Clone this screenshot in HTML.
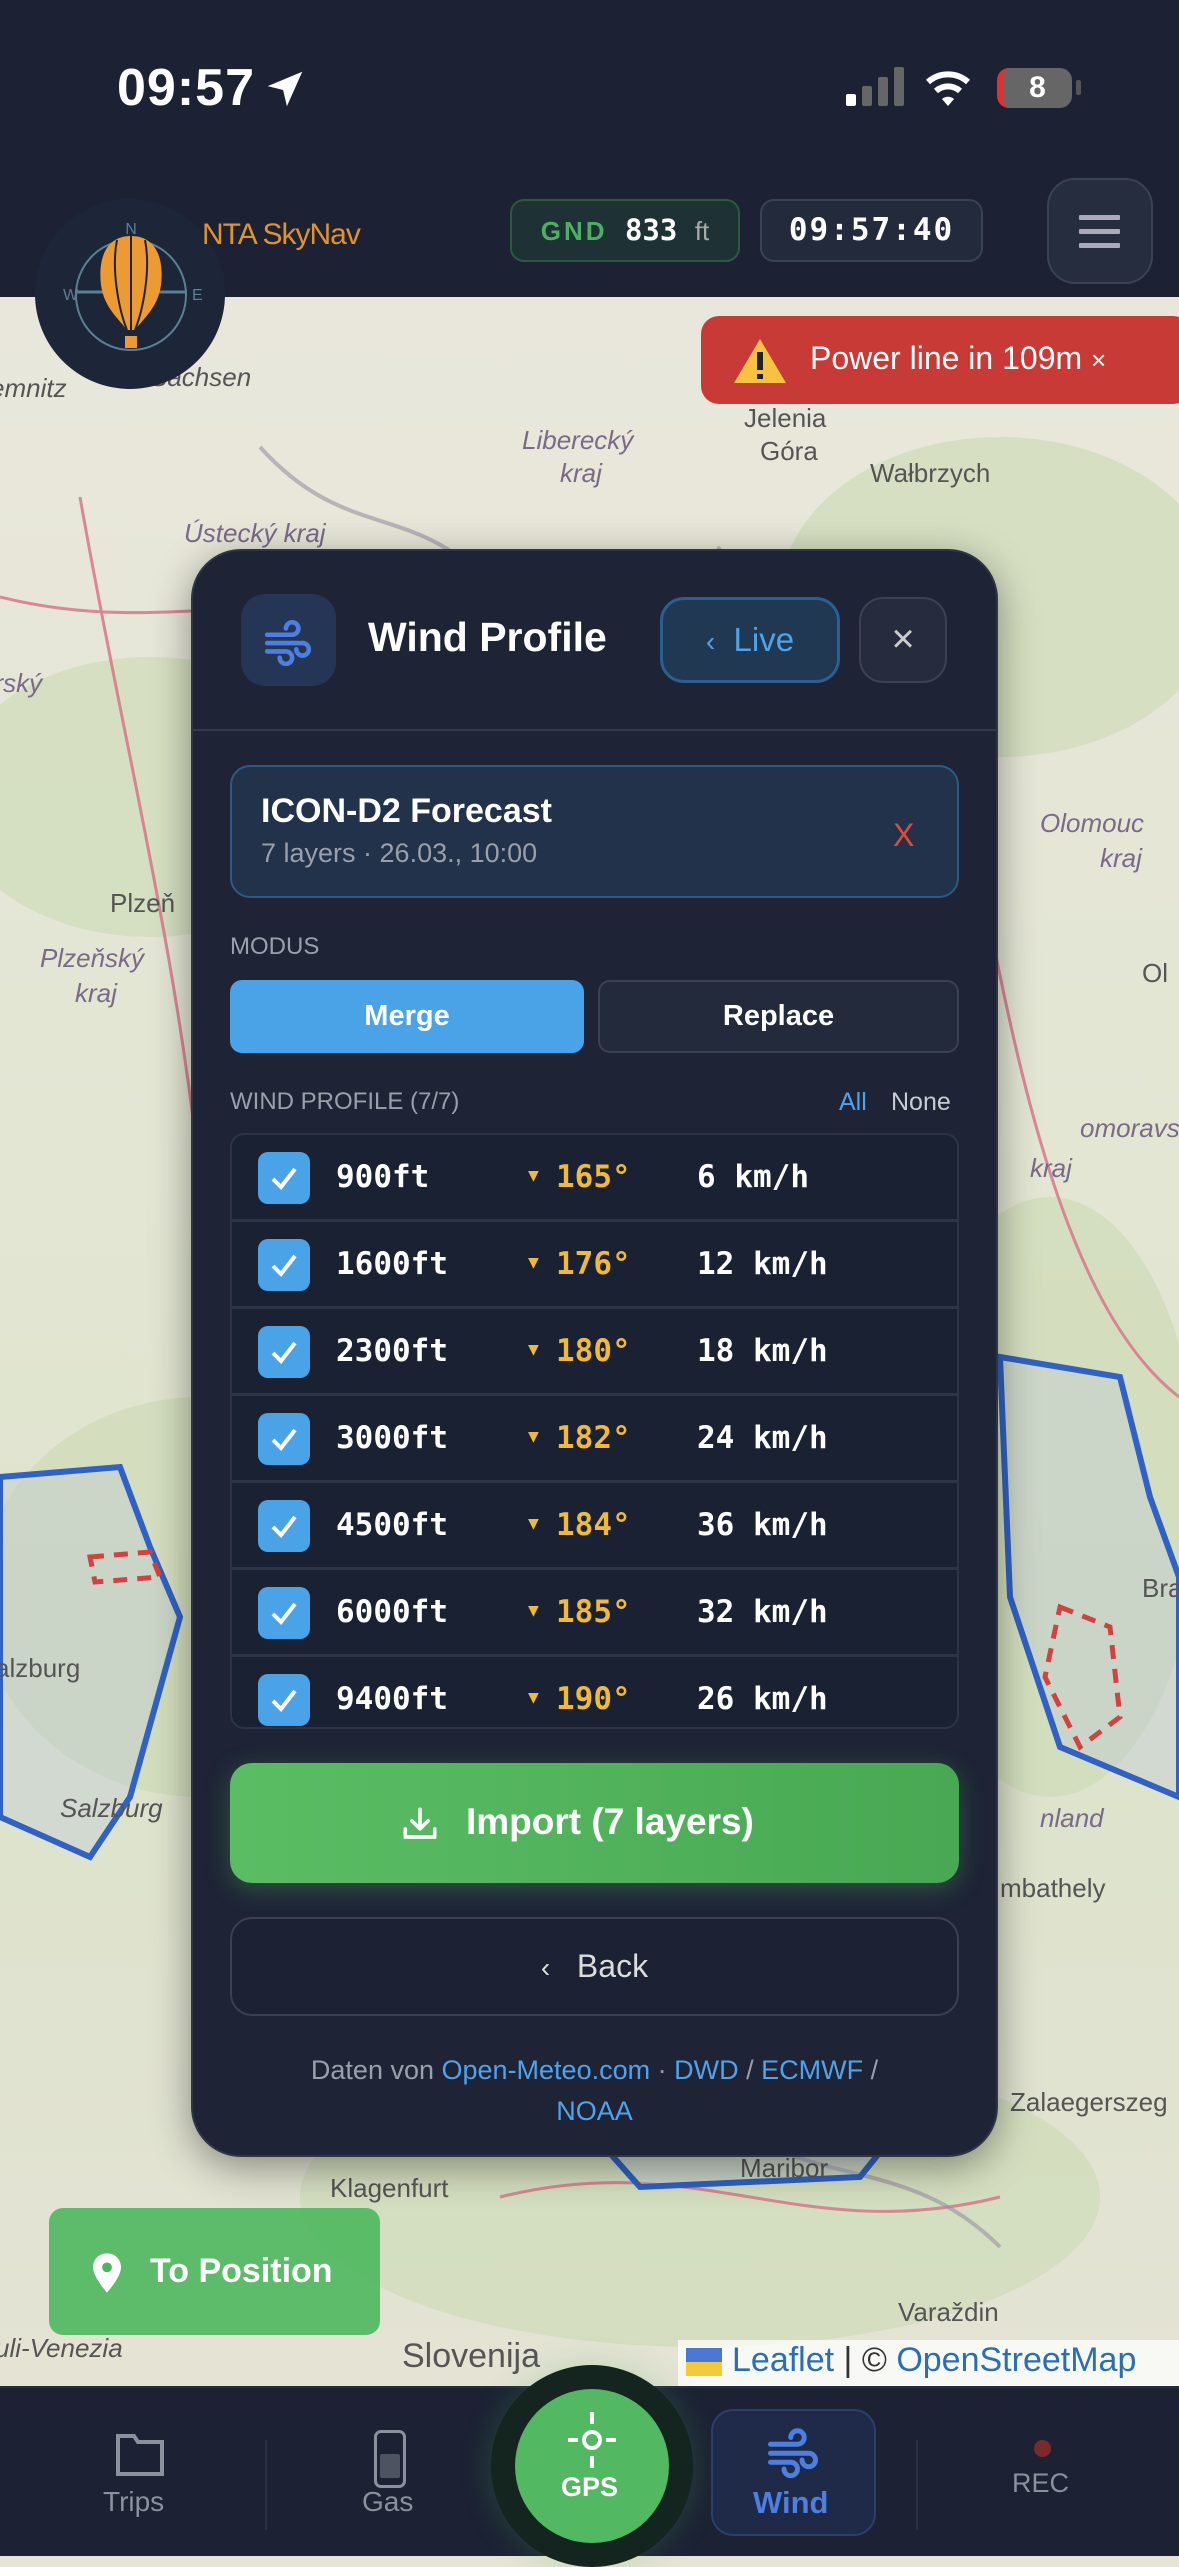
<!DOCTYPE html>
<html><head><meta charset="utf-8"><style>
*{box-sizing:border-box;margin:0;padding:0}
body{width:1179px;height:2556px;overflow:hidden;position:relative;font-family:"Liberation Sans","DejaVu Sans",sans-serif;background:#e6e4d6}
.abs{position:absolute}
.mono{font-family:"DejaVu Sans Mono","Liberation Mono",monospace;font-weight:bold}
.map{left:0;top:297px;width:1179px;height:2090px;background:linear-gradient(180deg,#e9e7dc 0%,#e3e6d3 40%,#dde3cc 70%,#e4e3d4 100%)}
.row{position:absolute;left:0;width:100%;height:87px;border-bottom:3px solid #2c3446;color:#fff;font-size:31px}
.cb{position:absolute;left:26px;top:17px;width:52px;height:52px;background:#4aa3e6;border-radius:10px}
.cb svg{position:absolute;left:12px;top:13px}
</style></head><body>
<div class="abs map">
<svg width="1179" height="2090" style="position:absolute;left:0;top:0">
<g fill="#cfdcb8" opacity=".7"><ellipse cx="150" cy="500" rx="200" ry="140"/><ellipse cx="1000" cy="300" rx="220" ry="160"/><ellipse cx="200" cy="1300" rx="220" ry="200"/><ellipse cx="700" cy="1900" rx="400" ry="150"/><ellipse cx="1050" cy="1200" rx="150" ry="300"/></g>
<g fill="none" stroke="#d96f86" stroke-width="3" opacity=".8"><path d="M0 300 C200 350 300 250 450 400 S700 500 900 450"/><path d="M80 200 C150 600 250 900 200 1400"/><path d="M950 400 C1000 700 1050 1000 1179 1100"/><path d="M500 1900 C700 1850 800 1950 1000 1900"/></g>
<g fill="none" stroke="#9a8fa6" stroke-width="4" opacity=".6"><path d="M260 150 C350 250 420 200 500 300 S650 350 720 250"/><path d="M700 1800 C800 1900 900 1850 1000 1950"/></g>
<g fill="#b9c6da" fill-opacity=".35" stroke="#2f62c4" stroke-width="6"><path d="M0 1180 L120 1170 L150 1250 L180 1320 L130 1500 L90 1560 L0 1520 Z"/><path d="M1000 1060 L1120 1080 L1150 1200 L1179 1280 L1179 1500 L1060 1450 L1010 1300 Z"/><path d="M560 1800 L800 1790 L900 1830 L860 1880 L640 1890 Z"/></g>
<g fill="none" stroke="#d1433f" stroke-width="5" stroke-dasharray="14 10"><path d="M1060 1310 L1110 1330 L1120 1420 L1080 1450 L1045 1380 Z"/><path d="M90 1260 L150 1255 L160 1280 L95 1285 Z"/></g>
<g font-family="Liberation Sans,sans-serif" font-size="26" fill="#555" font-style="italic"><text x="-10" y="100">emnitz</text><text x="150" y="89">Sachsen</text><text x="522" y="152" fill="#7a6a88">Liberecký</text><text x="560" y="185" fill="#7a6a88">kraj</text><text x="744" y="130" font-style="normal">Jelenia</text><text x="760" y="163" font-style="normal">Góra</text><text x="870" y="185" font-style="normal">Wałbrzych</text><text x="184" y="245" fill="#7a6a88">Ústecký kraj</text><text x="-20" y="395" fill="#7a6a88">arský</text><text x="1040" y="535" fill="#7a6a88">Olomouc</text><text x="1100" y="570" fill="#7a6a88">kraj</text><text x="110" y="615" font-style="normal">Plzeň</text><text x="40" y="670" fill="#7a6a88">Plzeňský</text><text x="75" y="705" fill="#7a6a88">kraj</text><text x="1142" y="685" font-style="normal">Ol</text><text x="1080" y="840" fill="#7a6a88">omoravský</text><text x="1030" y="880" fill="#7a6a88">kraj</text><text x="-5" y="1380" font-style="normal">alzburg</text><text x="60" y="1520">Salzburg</text><text x="1040" y="1530" fill="#7a6a88">nland</text><text x="1000" y="1600" font-style="normal">mbathely</text><text x="1010" y="1814" font-style="normal">Zalaegerszeg</text><text x="330" y="1900" font-style="normal">Klagenfurt</text><text x="740" y="1880" font-style="normal">Maribor</text><text x="898" y="2024" font-style="normal">Varaždin</text><text x="-5" y="2060">uli-Venezia</text><text x="402" y="2070" font-style="normal" font-size="34">Slovenija</text><text x="1142" y="1300" font-style="normal">Brati</text></g>
</svg>
</div>
<div class="abs" style="left:0;top:0;width:1179px;height:297px;background:#1c2234"></div>
<div class="abs" style="left:117px;top:58px;color:#fff;font-size:52px;font-weight:bold;letter-spacing:1px">09:57</div>
<svg class="abs" style="left:262px;top:66px" width="46" height="46" viewBox="0 0 24 24"><path d="M21 3 L3 10.5 L11 12.5 L13 21 Z" fill="#fff"/></svg>
<div class="abs" style="left:846px;top:94px;width:10px;height:12px;background:#fff;border-radius:2px"></div>
<div class="abs" style="left:862px;top:86px;width:10px;height:20px;background:#666;border-radius:2px"></div>
<div class="abs" style="left:878px;top:77px;width:10px;height:29px;background:#666;border-radius:2px"></div>
<div class="abs" style="left:894px;top:67px;width:10px;height:39px;background:#666;border-radius:2px"></div>
<svg class="abs" style="left:925px;top:68px" width="46" height="40" viewBox="0 0 46 40"><path d="M3 14 A30 30 0 0 1 43 14" stroke="#fff" stroke-width="6" fill="none"/><path d="M11 23 A18 18 0 0 1 35 23" stroke="#fff" stroke-width="6" fill="none"/><path d="M17 31 L23 38 L29 31 A9 9 0 0 0 17 31Z" fill="#fff"/></svg>
<div class="abs" style="left:997px;top:68px;width:75px;height:40px;background:#666;border-radius:12px;border-left:6px solid #e03030;color:#fff;font-size:30px;font-weight:bold;text-align:center;line-height:40px">8</div>
<div class="abs" style="left:1076px;top:80px;width:5px;height:15px;background:#555;border-radius:2px"></div>
<div class="abs" style="left:35px;top:199px;width:190px;height:190px;border-radius:50%;background:#1c2638"></div>
<svg class="abs" style="left:35px;top:210px" width="190" height="160" viewBox="0 0 190 160">
<text x="96" y="24" fill="#5b7f93" font-size="16" text-anchor="middle" font-family="Liberation Sans">N</text>
<text x="28" y="90" fill="#5b7f93" font-size="16" font-family="Liberation Sans">W</text>
<text x="157" y="90" fill="#5b7f93" font-size="16" font-family="Liberation Sans">E</text>
<circle cx="96" cy="85" r="55" fill="none" stroke="#5b7f93" stroke-width="2"/>
<path d="M40 82 H152" stroke="#5b7f93" stroke-width="3"/>
<path d="M96 26 C70 26 63 50 66 75 C69 98 85 110 92 120 L100 120 C107 110 123 98 126 75 C129 50 122 26 96 26Z" fill="#ee9a32"/>
<path d="M96 26 V120 M82 30 C76 60 84 100 92 120 M110 30 C116 60 108 100 100 120" stroke="#1c2638" stroke-width="2" fill="none"/>
<rect x="90" y="126" width="12" height="12" fill="#ee9a32"/>
</svg>
<div class="abs" style="left:202px;top:218px;color:#e0922f;font-size:30px;letter-spacing:-1px">NTA SkyNav</div>
<div class="abs mono" style="left:510px;top:199px;width:230px;height:63px;border:2px solid #2c5a3e;background:#1e3236;border-radius:14px;font-size:29px;line-height:59px;text-align:center;color:#fff"><span style="color:#4caf62;font-family:'Liberation Sans';font-weight:bold;letter-spacing:3px;font-size:26px">GND</span> 833 <span style="color:#aaa;font-weight:normal;font-family:'Liberation Sans';font-size:26px">ft</span></div>
<div class="abs mono" style="left:760px;top:199px;width:223px;height:63px;border:2px solid #3b4253;background:#232a3b;border-radius:14px;font-size:31px;line-height:59px;text-align:center;color:#fff;letter-spacing:2px">09:57:40</div>
<div class="abs" style="left:1047px;top:178px;width:106px;height:106px;border:2px solid #3b4253;background:#262d3e;border-radius:28px"></div>
<div class="abs" style="left:1079px;top:215px;width:41px;height:5px;background:#aab;border-radius:1px;box-shadow:0 14px 0 #aab,0 28px 0 #aab"></div>
<div class="abs" style="left:701px;top:316px;width:490px;height:88px;background:#c83a36;border-radius:18px"></div>
<svg class="abs" style="left:732px;top:337px" width="56" height="48" viewBox="0 0 56 48"><path d="M28 2 L54 46 H2 Z" fill="#f5c242"/><rect x="25" y="15" width="6" height="18" fill="#222"/><rect x="25" y="37" width="6" height="5" fill="#222"/></svg>
<div class="abs" style="left:810px;top:340px;color:#fff;font-size:32px">Power line in 109m <span style="font-size:26px">×</span></div>
<div class="abs" style="left:191px;top:549px;width:807px;height:1608px;background:#1e2436;border-radius:50px;border:2px solid #2e3546;box-shadow:0 10px 40px rgba(0,0,0,.4)"></div>
<div class="abs" style="left:241px;top:594px;width:95px;height:92px;background:#243556;border-radius:24px"></div>
<svg class="abs" style="left:262px;top:616px" width="52" height="50" viewBox="0 0 24 24" fill="none" stroke="#4d7fe0" stroke-width="2.2" stroke-linecap="round"><path d="M2 9h12a3 3 0 1 0-3-3M2 13h17a3 3 0 1 1-3 3M2 17h9a3 3 0 1 1-3 3"/></svg>
<div class="abs" style="left:368px;top:614px;color:#fff;font-size:41px;font-weight:bold">Wind Profile</div>
<div class="abs" style="left:660px;top:597px;width:180px;height:86px;border:3px solid #2a5f92;background:#213852;border-radius:24px;color:#4fa3ec;font-size:33px;line-height:80px;text-align:center"><span style="font-size:28px">‹</span>&nbsp; Live</div>
<div class="abs" style="left:859px;top:597px;width:88px;height:86px;border:2px solid #3a4152;background:#262c3d;border-radius:24px;color:#ccc;font-size:40px;line-height:80px;text-align:center">×</div>
<div class="abs" style="left:193px;top:729px;width:803px;height:2px;background:#323a4c"></div>
<div class="abs" style="left:230px;top:765px;width:729px;height:133px;border:2px solid #2d5a84;background:#22324a;border-radius:20px"></div>
<div class="abs" style="left:261px;top:792px;color:#fff;font-size:34px;font-weight:bold">ICON-D2 Forecast</div>
<div class="abs" style="left:261px;top:838px;color:#9aa0ab;font-size:27px">7 layers · 26.03., 10:00</div>
<div class="abs" style="left:893px;top:817px;color:#e24a3c;font-size:32px">X</div>
<div class="abs" style="left:230px;top:933px;color:#9aa0ab;font-size:24px">MODUS</div>
<div class="abs" style="left:230px;top:980px;width:354px;height:73px;background:#4aa3e6;border-radius:12px;color:#fff;font-size:29px;font-weight:bold;line-height:73px;text-align:center">Merge</div>
<div class="abs" style="left:598px;top:980px;width:361px;height:73px;background:#232a3b;border:2px solid #3a4152;border-radius:12px;color:#fff;font-size:29px;font-weight:bold;line-height:69px;text-align:center">Replace</div>
<div class="abs" style="left:230px;top:1088px;color:#9aa0ab;font-size:24px">WIND PROFILE (7/7)</div>
<div class="abs" style="left:839px;top:1088px;color:#4fa3ec;font-size:25px">All</div>
<div class="abs" style="left:891px;top:1088px;color:#c8ccd3;font-size:25px">None</div>
<div class="abs" style="left:230px;top:1133px;width:729px;height:596px;border:2px solid #2c3446;background:#192133;border-radius:14px;overflow:hidden">
<div class="row mono" style="top:0"><div class="cb"><svg width="28" height="26" viewBox="0 0 28 26"><path d="M3 14 L11 22 L25 4" stroke="#fff" stroke-width="4" fill="none"/></svg></div><span class="abs" style="left:104px;top:24px">900ft</span><span class="abs" style="left:296px;top:30px;color:#f0b93a;font-size:18px">▼</span><span class="abs" style="left:324px;top:24px;color:#f0b93a">165°</span><span class="abs" style="left:465px;top:24px">6 km/h</span></div>
<div class="row mono" style="top:87px"><div class="cb"><svg width="28" height="26" viewBox="0 0 28 26"><path d="M3 14 L11 22 L25 4" stroke="#fff" stroke-width="4" fill="none"/></svg></div><span class="abs" style="left:104px;top:24px">1600ft</span><span class="abs" style="left:296px;top:30px;color:#f0b93a;font-size:18px">▼</span><span class="abs" style="left:324px;top:24px;color:#f0b93a">176°</span><span class="abs" style="left:465px;top:24px">12 km/h</span></div>
<div class="row mono" style="top:174px"><div class="cb"><svg width="28" height="26" viewBox="0 0 28 26"><path d="M3 14 L11 22 L25 4" stroke="#fff" stroke-width="4" fill="none"/></svg></div><span class="abs" style="left:104px;top:24px">2300ft</span><span class="abs" style="left:296px;top:30px;color:#f0b93a;font-size:18px">▼</span><span class="abs" style="left:324px;top:24px;color:#f0b93a">180°</span><span class="abs" style="left:465px;top:24px">18 km/h</span></div>
<div class="row mono" style="top:261px"><div class="cb"><svg width="28" height="26" viewBox="0 0 28 26"><path d="M3 14 L11 22 L25 4" stroke="#fff" stroke-width="4" fill="none"/></svg></div><span class="abs" style="left:104px;top:24px">3000ft</span><span class="abs" style="left:296px;top:30px;color:#f0b93a;font-size:18px">▼</span><span class="abs" style="left:324px;top:24px;color:#f0b93a">182°</span><span class="abs" style="left:465px;top:24px">24 km/h</span></div>
<div class="row mono" style="top:348px"><div class="cb"><svg width="28" height="26" viewBox="0 0 28 26"><path d="M3 14 L11 22 L25 4" stroke="#fff" stroke-width="4" fill="none"/></svg></div><span class="abs" style="left:104px;top:24px">4500ft</span><span class="abs" style="left:296px;top:30px;color:#f0b93a;font-size:18px">▼</span><span class="abs" style="left:324px;top:24px;color:#f0b93a">184°</span><span class="abs" style="left:465px;top:24px">36 km/h</span></div>
<div class="row mono" style="top:435px"><div class="cb"><svg width="28" height="26" viewBox="0 0 28 26"><path d="M3 14 L11 22 L25 4" stroke="#fff" stroke-width="4" fill="none"/></svg></div><span class="abs" style="left:104px;top:24px">6000ft</span><span class="abs" style="left:296px;top:30px;color:#f0b93a;font-size:18px">▼</span><span class="abs" style="left:324px;top:24px;color:#f0b93a">185°</span><span class="abs" style="left:465px;top:24px">32 km/h</span></div>
<div class="row mono" style="top:522px;border:none"><div class="cb"><svg width="28" height="26" viewBox="0 0 28 26"><path d="M3 14 L11 22 L25 4" stroke="#fff" stroke-width="4" fill="none"/></svg></div><span class="abs" style="left:104px;top:24px">9400ft</span><span class="abs" style="left:296px;top:30px;color:#f0b93a;font-size:18px">▼</span><span class="abs" style="left:324px;top:24px;color:#f0b93a">190°</span><span class="abs" style="left:465px;top:24px">26 km/h</span></div>
</div>
<div class="abs" style="left:230px;top:1763px;width:729px;height:120px;background:linear-gradient(90deg,#5abd64,#48a853);border-radius:22px;box-shadow:0 6px 24px rgba(76,175,90,.35)"></div>
<svg class="abs" style="left:400px;top:1806px" width="40" height="36" viewBox="0 0 24 22" fill="none" stroke="#fff" stroke-width="2.2" stroke-linecap="round" stroke-linejoin="round"><path d="M12 2v11M7 9l5 5 5-5M3 14v5h18v-5"/></svg>
<div class="abs" style="left:466px;top:1801px;color:#fff;font-size:37px;font-weight:bold">Import (7 layers)</div>
<div class="abs" style="left:230px;top:1917px;width:729px;height:99px;border:2px solid #3a4152;background:#1c2233;border-radius:22px;color:#ddd;font-size:32px;line-height:95px;text-align:center"><span style="font-size:28px">‹</span>&nbsp;&nbsp; Back</div>
<div class="abs" style="left:193px;top:2050px;width:803px;text-align:center;color:#9aa0ab;font-size:27px;line-height:41px">Daten von <span style="color:#4fa3ec">Open-Meteo.com</span> · <span style="color:#4fa3ec">DWD</span> / <span style="color:#4fa3ec">ECMWF</span> /<br><span style="color:#4fa3ec">NOAA</span></div>
<div class="abs" style="left:49px;top:2208px;width:331px;height:127px;background:rgba(80,185,95,.92);border-radius:14px"></div>
<svg class="abs" style="left:90px;top:2252px" width="34" height="42" viewBox="0 0 24 30"><path d="M12 1C6 1 2 5.5 2 11c0 7 10 18 10 18s10-11 10-18C22 5.5 18 1 12 1z" fill="#fff"/><circle cx="12" cy="11" r="3.5" fill="#4fb55d"/></svg>
<div class="abs" style="left:150px;top:2252px;color:#fff;font-size:34px;font-weight:bold">To Position</div>
<div class="abs" style="left:678px;top:2340px;width:501px;height:46px;background:rgba(255,255,255,.75)"></div>
<div class="abs" style="left:686px;top:2348px;width:36px;height:14px;background:#4a78d2"></div>
<div class="abs" style="left:686px;top:2362px;width:36px;height:14px;background:#f3c93d"></div>
<div class="abs" style="left:732px;top:2341px;font-size:34px;color:#333"><span style="color:#2a6fb0">Leaflet</span> | © <span style="color:#2a6fb0">OpenStreetMap</span></div>
<div class="abs" style="left:0;top:2386px;width:1179px;height:170px;background:#1c2234;border-top:2px solid #262d3f"></div>
<svg class="abs" style="left:114px;top:2432px" width="52" height="46" viewBox="0 0 26 23" fill="none" stroke="#8a909c" stroke-width="2"><path d="M2 2h8l2 3h12v16H2z"/></svg>
<div class="abs" style="left:103px;top:2486px;color:#8a909c;font-size:28px">Trips</div>
<div class="abs" style="left:265px;top:2440px;width:2px;height:90px;background:#2a3142"></div>
<div class="abs" style="left:374px;top:2430px;width:32px;height:58px;border:3px solid #8a909c;border-radius:7px"></div>
<div class="abs" style="left:380px;top:2454px;width:20px;height:24px;background:#4d5361;border-radius:2px"></div>
<div class="abs" style="left:362px;top:2486px;color:#8a909c;font-size:28px">Gas</div>
<div class="abs" style="left:491px;top:2365px;width:202px;height:202px;border-radius:50%;background:#14241e;box-shadow:0 0 30px rgba(76,175,90,.25)"></div>
<div class="abs" style="left:515px;top:2389px;width:154px;height:154px;border-radius:50%;background:#53b862"></div>
<svg class="abs" style="left:564px;top:2410px" width="56" height="60" viewBox="0 0 56 60" stroke="#fff" stroke-width="4" fill="none"><circle cx="28" cy="30" r="8"/><path d="M28 2v12M28 46v12M4 30h10M42 30h10"/></svg>
<div class="abs" style="left:561px;top:2472px;color:#fff;font-size:27px;font-weight:bold">GPS</div>
<div class="abs" style="left:711px;top:2409px;width:165px;height:127px;border:2px solid #2a3f6e;background:#1f2a48;border-radius:22px"></div>
<svg class="abs" style="left:766px;top:2424px" width="54" height="54" viewBox="0 0 24 24" fill="none" stroke="#4d7fe0" stroke-width="2.2" stroke-linecap="round"><path d="M2 9h12a3 3 0 1 0-3-3M2 13h17a3 3 0 1 1-3 3M2 17h9a3 3 0 1 1-3 3"/></svg>
<div class="abs" style="left:753px;top:2485px;color:#4d7fe0;font-size:31px;font-weight:bold">Wind</div>
<div class="abs" style="left:916px;top:2440px;width:2px;height:90px;background:#2a3142"></div>
<div class="abs" style="left:1034px;top:2440px;width:17px;height:17px;border-radius:50%;background:#7a2a2c"></div>
<div class="abs" style="left:1012px;top:2468px;color:#8a909c;font-size:27px">REC</div>
</body></html>
